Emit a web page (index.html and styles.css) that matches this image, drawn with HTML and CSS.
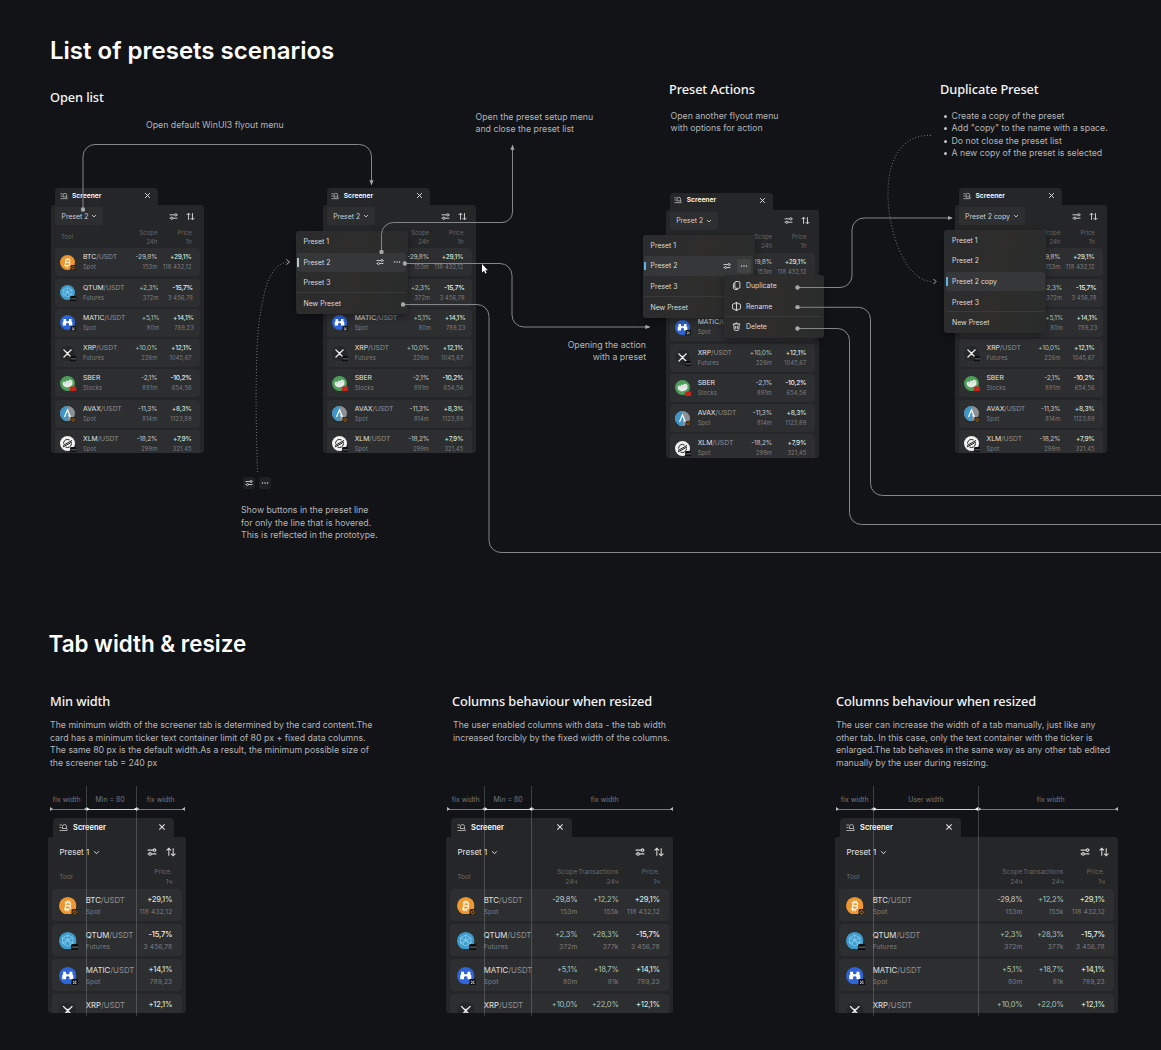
FILE: index.html
```html
<!DOCTYPE html>
<html lang="en">
<head>
    <meta charset="UTF-8">
    <meta name="viewport" content="width=device-width, initial-scale=1.0">
    <title>List of presets scenarios</title>
    <link rel="stylesheet" href="styles.css">
</head>
<body>
    <svg class="sprite" width="0" height="0">
        <symbol id="i-screener" viewBox="0 0 18 18"><path d="M1 4h5M1 9h4M1 15h16M7 11V7a4 4 0 0 1 8 0v4M6 11h10M14 11l3 2"/></symbol>
        <symbol id="i-close" viewBox="0 0 12 12"><path d="M2 2l8 8M10 2l-8 8"/></symbol>
        <symbol id="i-chevron" viewBox="0 0 12 12"><path d="M2 4l4 4 4-4"/></symbol>
        <symbol id="i-sliders" viewBox="0 0 16 16"><path d="M1 5h9M14 5h1M1 11h2M7 11h8"/><circle cx="12" cy="5" r="2"/><circle cx="5" cy="11" r="2"/></symbol>
        <symbol id="i-sort" viewBox="0 0 16 16"><path d="M4.500 14V2M1 5.500L4.500 2 8 5.500M11.500 2v12M8 10.500l3.500 3.500 3.500-3.500"/></symbol>
        <symbol id="i-dots" viewBox="0 0 16 16"><g class="solid"><circle cx="3" cy="8" r="1.500"/><circle cx="8" cy="8" r="1.500"/><circle cx="13" cy="8" r="1.500"/></g></symbol>
        <symbol id="i-copy" viewBox="0 0 16 16"><rect x="5" y="1" width="9" height="12" rx="2"/><path d="M5 3.500C3 3.500 2.500 4.500 2.500 6v6c0 2 1 3 3 3h5"/></symbol>
        <symbol id="i-rename" viewBox="0 0 16 16"><path d="M6.500 3H3a2 2 0 0 0-2 2v6a2 2 0 0 0 2 2h3.500M9.500 3H13a2 2 0 0 1 2 2v6a2 2 0 0 1-2 2H9.500M8 1v14M6 1h4M6 15h4"/></symbol>
        <symbol id="i-trash" viewBox="0 0 16 16"><path d="M1.500 3.500h13M6 3.500a2 2 0 0 1 4 0M3 3.500L4 13a2 2 0 0 0 2 2h4a2 2 0 0 0 2-2l1-9.500M6.500 7v5M9.500 7v5"/></symbol>

        <symbol id="c-btc" viewBox="0 0 30 30"><circle cx="15" cy="15" r="15" fill="#ee962f"/><path d="M12.500 8.500L10.500 21M10 9.500h7c4.500.5 3.500 5.500-.5 5.500h-5H17c4.500.5 3 6-1.500 6H8.500M14.500 6v3.500M18 6.500v3M12 21v3.500M15.500 21v3.500" fill="none" stroke="#fff3dd" stroke-width="2.300"/></symbol>
        <symbol id="c-qtum" viewBox="0 0 30 30"><circle cx="15" cy="15" r="15" fill="#3f9bcc"/><path d="M15 5l9 5v9l-9 5-9-5v-9zM15 5v9l9 5M15 14l-9 5M6 10l9 4 9-4M10 21l5-7 5 7M20 22l4 3" fill="none" stroke="#8ed3f0" stroke-width="1.300"/></symbol>
        <symbol id="c-matic" viewBox="0 0 30 30"><circle cx="15" cy="15" r="15" fill="#2f64d6"/><path d="M7 8h5v3.500l3 1.500 3-1.500V8h5v5l1.500 1v7H18v-4l-3-1.500-3 1.500v4H5.500v-7L7 13z" fill="#fff"/></symbol>
        <symbol id="c-xrp" viewBox="0 0 30 30"><circle cx="15" cy="15" r="15" fill="#242628"/><path d="M7 7l4.500 4.500c2 2 5 2 7 0L23 7M7 23l4.500-4.500c2-2 5-2 7 0L23 23M12 12l6 6M18 12l-6 6" fill="none" stroke="#eee" stroke-width="2.200"/></symbol>
        <symbol id="c-sber" viewBox="0 0 30 30"><circle cx="15" cy="15" r="15" fill="#4d9d5c"/><path d="M5 15l2-4 4 1 2-3 3 1 4-3 5 3v7l-4 4-8 2-6-3z" fill="#e6ebe6"/><path d="M9 15l3-2M14 14l3-2M19 13l3-2" stroke="#9aa79b" fill="none"/></symbol>
        <symbol id="c-avax" viewBox="0 0 30 30"><circle cx="15" cy="15" r="15" fill="#8b9095"/><path d="M15 0A15 15 0 0 0 15 30L17 15z" fill="#3f95c4"/><path d="M9 22l6-14 6 14M17 18l2 3" fill="none" stroke="#f3f6f8" stroke-width="2.600"/></symbol>
        <symbol id="c-xlm" viewBox="0 0 30 30"><circle cx="15" cy="15" r="15" fill="#f2f2f2"/><path d="M6 19L24 9M6 22l18-10M7 15a8 8 0 0 1 12-7M23 15a8 8 0 0 1-12 7" fill="none" stroke="#1c1d1f" stroke-width="2"/></symbol>

        <symbol id="x-binance" viewBox="0 0 12 12"><rect width="12" height="12" rx="3" fill="#30251a"/><path d="M6 2.500L9.500 6 6 9.500 2.500 6z" fill="none" stroke="#d0802c" stroke-width="1.500"/></symbol>
        <symbol id="x-okx" viewBox="0 0 12 12"><rect width="12" height="12" rx="2" fill="#101113"/><path d="M3 3h2v2H3zM7 3h2v2H7zM5 5h2v2H5zM3 7h2v2H3zM7 7h2v2H7z" fill="#e8e8e8"/></symbol>
        <symbol id="x-bybit" viewBox="0 0 14 12"><rect width="14" height="12" rx="3" fill="#0d0e10"/><path d="M2 4.500v3M4 4.500v3M6 5v3M8 4.500v3M10 4.500v3M12 4.500v3" stroke="#a6a6a6" fill="none"/></symbol>
        <symbol id="x-moex" viewBox="0 0 14 12"><rect y="1" width="14" height="10" rx="3" fill="#c8231b"/></symbol>
    </svg>

    <main class="canvas">
        <section class="board">
            <h1>List of presets scenarios</h1>

            <h2 class="open-list">Open list</h2>
            <p class="note note-flyout">Open default WinUI3 flyout menu</p>
            <p class="note note-setup">Open the preset setup menu<br>and close the preset list</p>
            <h2 class="preset-actions">Preset Actions</h2>
            <p class="note note-options">Open another flyout menu<br>with options for action</p>
            <h2 class="duplicate-preset">Duplicate Preset</h2>
            <ul class="note note-rules">
                <li>Create a copy of the preset</li>
                <li>Add "copy" to the name with a space.</li>
                <li>Do not close the preset list</li>
                <li>A new copy of the preset is selected</li>
            </ul>
            <p class="note note-action">Opening the action<br>with a preset</p>
            <div class="hover-buttons">
                <span><svg class="icon"><use href="#i-sliders"/></svg></span>
                <span><svg class="icon"><use href="#i-dots"/></svg></span>
            </div>
            <p class="note note-hover">Show buttons in the preset line<br>for only the line that is hovered.<br>This is reflected in the prototype.</p>

            <div class="panel panel-1" data-preset="Preset 2" data-cols="scope,price" data-rows="7"></div>
            <div class="panel panel-2" data-preset="Preset 2" data-cols="scope,price" data-rows="7"></div>
            <div class="panel panel-3" data-preset="Preset 2" data-cols="scope,price" data-rows="7"></div>
            <div class="panel panel-4" data-preset="Preset 2 copy" data-cols="scope,price" data-rows="7"></div>

            <div class="menu menu-hover">
                <div class="item">Preset 1</div>
                <div class="item active">Preset 2
                    <span class="tools"><i><svg class="icon"><use href="#i-sliders"/></svg></i><i><svg class="icon"><use href="#i-dots"/></svg></i></span>
                </div>
                <div class="item">Preset 3</div>
                <div class="item divided">New Preset</div>
            </div>

            <div class="menu menu-actions">
                <div class="item">Preset 1</div>
                <div class="item active">Preset 2
                    <span class="tools"><i><svg class="icon"><use href="#i-sliders"/></svg></i><i class="pressed"><svg class="icon"><use href="#i-dots"/></svg></i></span>
                </div>
                <div class="item">Preset 3</div>
                <div class="item divided">New Preset</div>
            </div>
            <div class="menu submenu">
                <div class="item"><svg class="icon"><use href="#i-copy"/></svg>Duplicate</div>
                <div class="item"><svg class="icon"><use href="#i-rename"/></svg>Rename</div>
                <div class="item divided"><svg class="icon"><use href="#i-trash"/></svg>Delete</div>
            </div>

            <div class="menu menu-copy">
                <div class="item">Preset 1</div>
                <div class="item">Preset 2</div>
                <div class="item active">Preset 2 copy</div>
                <div class="item">Preset 3</div>
                <div class="item divided">New Preset</div>
            </div>

            <!-- connectors between the screens -->
            <svg class="wires" width="1161" height="600" viewBox="0 0 1161 600">
                <defs>
                    <marker id="arrow" viewBox="0 0 6 6" refX="5" refY="3" markerWidth="5" markerHeight="5" markerUnits="userSpaceOnUse" orient="auto"><path d="M0 .5L6 3 0 5.500z"/></marker>
                    <marker id="dot" viewBox="0 0 6 6" refX="3" refY="3" markerWidth="4.400" markerHeight="4.400" markerUnits="userSpaceOnUse"><circle cx="3" cy="3" r="3"/></marker>
                </defs>
                <g class="wire">
                    <path d="M83 209.500V156.500a12 12 0 0 1 12-12H359.500a12 12 0 0 1 12 12V184.500"/>
                    <path d="M381.500 252V234.500a12 12 0 0 1 12-12H502a10.500 10.500 0 0 0 10.500-10.500V145.500"/>
                    <path d="M404.800 263.500H500a12 12 0 0 1 12 12V315a12 12 0 0 0 12 12H649.500"/>
                    <path class="no-arrow" d="M403 304.500H477a12 12 0 0 1 12 12V540.500a12 12 0 0 0 12 12H1161"/>
                    <path d="M797.500 287.500H840a12 12 0 0 0 12-12V230a12 12 0 0 1 12-12H952"/>
                    <path class="no-arrow" d="M797.500 307.300H858.500a12 12 0 0 1 12 12V483.500a12 12 0 0 0 12 12H1161"/>
                    <path class="no-arrow" d="M797.500 328.500H837.500a12 12 0 0 1 12 12V512.500a12 12 0 0 0 12 12H1161"/>
                </g>
                <g class="dotted">
                    <path d="M257.500 472C256.500 440 255.500 400 256.500 370C257 340 258 320 264 295C268 276 276 263 288 262"/>
                    <path d="M931 135.500C905 134 889 155 888 190C887 230 905 280 931 281.500"/>
                </g>
                <path class="tip" d="M286.500 259.500l3 2.500-3 2.500M933.500 279l2.500 2.500-2.500 2.500"/>
                <path class="cursor" d="M482 264v8.500l2-1.700 1.300 2.800 1.300-.6-1.300-2.700h2.500z"/>
            </svg>
        </section>

        <section class="resize">
            <h1>Tab width &amp; resize</h1>
            <div class="columns">
                <article class="col-min">
                    <h2>Min width</h2>
                    <p>The minimum width of the screener tab is determined by the card content.The<br>card has a minimum ticker text container limit of 80 px + fixed data columns.<br>The same 80 px is the default width.As a result, the minimum possible size of<br>the screener tab = 240 px</p>
                    <div class="sample">
                        <div class="ruler"><span>fix width</span><span class="bright">Min = 80</span><span>fix width</span></div>
                        <div class="panel large" data-preset="Preset 1" data-cols="price" data-rows="4"></div>
                    </div>
                </article>
                <article class="col-data">
                    <h2>Columns behaviour when resized</h2>
                    <p>The user enabled columns with data - the tab width<br>increased forcibly by the fixed width of the columns.</p>
                    <div class="sample">
                        <div class="ruler"><span>fix width</span><span class="bright">Min = 80</span><span>fix width</span></div>
                        <div class="panel large" data-preset="Preset 1" data-cols="scope,trans,price" data-rows="4"></div>
                    </div>
                </article>
                <article class="col-user">
                    <h2>Columns behaviour when resized</h2>
                    <p>The user can increase the width of a tab manually, just like any<br>other tab. In this case, only the text container with the ticker is<br>enlarged.The tab behaves in the same way as any other tab edited<br>manually by the user during resizing.</p>
                    <div class="sample">
                        <div class="ruler"><span>fix width</span><span class="bright">User width</span><span>fix width</span></div>
                        <div class="panel large" data-preset="Preset 1" data-cols="scope,trans,price" data-rows="4"></div>
                    </div>
                </article>
            </div>
        </section>
    </main>
    <script src="script.js"></script>
</body>
</html>
```
FILE: styles.css
```css
* { box-sizing: border-box; }
body {
    margin: 0;
    background-color: #121317;
    color: #fff;
    font-family: Inter, "Liberation Sans", sans-serif;
}
h1, h2, p, ul { margin: 0; }
h1 {
    font-size: 24px;
    line-height: 30px;
    font-weight: 600;
    white-space: nowrap;
}
h2 {
    font-family: "Noto Sans", "Open Sans", sans-serif;
    font-size: 12.8px;
    line-height: 18px;
    letter-spacing: -.1px;
    font-weight: 500;
    color: #f4f4f4;
    white-space: nowrap;
}
.sprite { position: absolute; }
.icon {
    width: 9px;
    height: 9px;
    flex: none;
    fill: none;
    stroke: currentColor;
    stroke-width: 1.7;
}
.icon .solid, .solid { fill: currentColor; stroke: none; }
.canvas {
    width: 1161px;
    height: 1050px;
    overflow: hidden;
}

/* top board */
.board {
    position: relative;
    height: 600px;
    padding: 36px 50px;
}
.board h2, .note, .hover-buttons, .board .panel, .menu, .wires { position: absolute; }
.open-list { left: 50px; top: 88px; }
.preset-actions { left: 669px; top: 80px; }
.duplicate-preset { left: 940px; top: 80px; }
.note, .resize p {
    font-size: 8.75px;
    line-height: 12.5px;
    color: #b4b5b7;
    white-space: nowrap;
}
.note-flyout { left: 146px; top: 119px; }
.note-setup { left: 475.500px; top: 110.500px; }
.note-options { left: 670.500px; top: 109.500px; }
.note-rules { left: 951.500px; top: 109.500px; padding: 0; list-style: none; }
.note-rules li::before {
    content: "";
    float: left;
    width: 3px;
    height: 3px;
    margin: 5px 0 0 -8px;
    border-radius: 50%;
    background-color: #c4c5c7;
}
.note-action { right: 515px; top: 338.500px; text-align: right; }
.note-hover { left: 241px; top: 504.400px; }
.hover-buttons { left: 243px; top: 477px; display: flex; gap: 4px; }
.hover-buttons span {
    display: flex;
    align-items: center;
    justify-content: center;
    width: 12px;
    height: 12px;
    border-radius: 2px;
    background-color: #1f2023;
    color: #ddd;
}
.hover-buttons .icon { width: 8px; height: 8px; }

/* screener panel */
.panel { width: 153px; }
.panel-1 { left: 51px; top: 188px; }
.panel-2 { left: 322.700px; top: 188px; }
.panel-3 { left: 665.700px; top: 192.500px; }
.panel-4 { left: 954.500px; top: 188px; width: 152.500px; }
.tab {
    display: flex;
    align-items: center;
    width: 103px;
    height: 17px;
    margin-left: 4px;
    padding: 0 7px 1.500px 4.500px;
    border-radius: 4px 4px 0 0;
    background-color: #252628;
    font-size: 6.7px;
}
.tab .icon { width: 8px; height: 8px; color: #c0c0c0; }
.tab b { margin-left: 4.500px; font-weight: 600; }
.tab .close { width: 7px; height: 7px; margin-left: auto; color: #ddd; }
.panel .body {
    height: 248px;
    padding: 0 4px;
    overflow: hidden;
    border-radius: 3px;
    background-color: #252628;
}
.toolbar {
    display: flex;
    align-items: center;
    height: 22.500px;
    padding-right: 5px;
    color: #d5d5d5;
}
.preset {
    display: flex;
    align-items: center;
    gap: 3px;
    height: 18px;
    padding: 0 6px 0 6.500px;
    border-radius: 2px;
    background-color: #2d2e2f;
    font-size: 6.9px;
    color: #cfcfcf;
}
.preset .icon { width: 6px; height: 6px; }
.toolbar > .icon { margin-left: 8px; }
.toolbar .first { margin-left: auto; }
.line {
    display: grid;
    grid-template-columns: 23px 1fr 34px 34.400px;
    align-items: center;
    padding: 0 8.300px 0 5px;
    white-space: nowrap;
}
.head {
    height: 20.800px;
    padding-bottom: 2.500px;
    font-size: 5.9px;
    line-height: 9px;
    color: #66686a;
}
.head .tool { grid-column: 1 / 3; padding-left: 1px; }
.num { text-align: right; justify-self: end; }
.row {
    height: 28px;
    margin-bottom: 2.250px;
    border-radius: 4px;
    background-color: #2d2e30;
    font-size: 6.8px;
    line-height: 10px;
}
.coin { position: relative; width: 15px; height: 15px; }
.coin svg { display: block; width: 15px; height: 15px; }
.coin .exchange {
    position: absolute;
    right: -1.500px;
    bottom: -1px;
    width: 6.500px;
    height: 5.500px;
}
.ticker { color: #e2e2e2; }
.ticker em { font-style: normal; color: #8f9193; }
.sub { font-size: 5.7px; letter-spacing: .15px; color: #7d7f81; }
.up, .down { font-size: .97em; letter-spacing: -.2px; }
.up { color: #a5c4b7; }
.down { color: #c6c7c8; }
.price .up { color: #cde4da; font-weight: 500; }
.price .down { color: #f2f2f2; font-weight: 500; }

/* flyout menus */
.menu {
    width: 112px;
    padding: .5px 1.500px;
    border-radius: 3px;
    background: linear-gradient(100deg, #2a2b2c, #2e2d2c 45%, #292b2b);
    box-shadow: 0 3px 7px rgba(0, 0, 0, .35);
    color: #dcdcdc;
    font-size: 6.9px;
}
.menu .item {
    position: relative;
    display: flex;
    align-items: center;
    height: 20.600px;
    padding-left: 6.500px;
    white-space: nowrap;
}
.menu .active {
    height: 19.600px;
    margin: .5px 0;
    border-radius: 2px;
    background-color: #363738;
}
.menu .active::before {
    content: "";
    position: absolute;
    left: 0;
    top: 5.500px;
    width: 2px;
    height: 8.500px;
    background-color: #5bb5e0;
}
.menu .divided { box-shadow: 0 -1px #383939; }
.tools { display: flex; gap: 3px; margin-left: auto; padding-right: 2px; }
.tools i {
    display: flex;
    align-items: center;
    justify-content: center;
    width: 14px;
    height: 14px;
    border-radius: 2px;
}
.tools .icon { width: 8px; height: 8px; }
.tools .pressed { background-color: #424343; }
.menu-hover { left: 295.500px; top: 231px; }
.menu-hover .active::before { background-color: #b5c5cc; }
.menu-actions { left: 642.500px; top: 234.500px; }
.submenu { left: 724px; top: 275px; width: 99.500px; }
.submenu .item { gap: 5px; }
.menu-copy { left: 944px; top: 229.500px; width: 102px; }

.wires { left: 0; top: 0; fill: none; }
.wire path { stroke: #85868a; marker-start: url(#dot); marker-end: url(#arrow); }
.wire .no-arrow { marker-end: none; }
.wires marker { fill: #a6a7aa; }
.wires marker path { stroke: none; }
.dotted { stroke: #77787b; stroke-dasharray: 1 2; }
.tip { stroke: #b0b1b4; }
.cursor { fill: #fff; }

/* bottom section */
.resize { padding: 29px 0 0 48.500px; }
.resize h1 { font-size: 22.4px; }
.columns {
    display: grid;
    grid-template-columns: 402px 384px 1fr;
    margin: 33px 0 0 1.500px;
}
.columns p { height: 76px; padding-top: 9.300px; }
.col-data p { padding-left: 1px; }
.columns .panel { margin-top: 8px; }
.sample { position: relative; width: 137.500px; margin-left: -2px; }
.col-data .sample { width: 227px; margin-left: -6px; }
.col-user .sample { width: 283px; margin-left: -1px; }
.ruler {
    display: grid;
    grid-template-columns: 36.500px 50px 48.500px;
    height: 24px;
    padding-left: 2px;
    font-size: 6.9px;
    color: #77787b;
    text-align: center;
    line-height: 20px;
}
.col-min .ruler span:not(:last-child) { text-indent: -3px; }
.col-data .ruler { grid-template-columns: 37.500px 47px 1fr; padding-left: 1px; }
.col-user .ruler { grid-template-columns: 37.500px 104.800px 1fr; padding-left: 1px; }
.col-data .ruler span:last-child, .col-user .ruler span:last-child { text-indent: 5px; }
.ruler span { position: relative; padding-top: 3.500px; border-bottom: 1px solid #77787b; height: 23.500px; }
.ruler .bright { border-color: #d0d0d2; }
.ruler span::before, .ruler span::after {
    content: "";
    position: absolute;
    bottom: -2.500px;
    width: 3px;
    height: 4px;
    background-color: #b9babc;
    clip-path: polygon(0 0, 100% 50%, 0 100%);
}
.ruler span::before { left: 0; }
.ruler span::after { right: 0; transform: scaleX(-1); }
.ruler .bright::before, .ruler .bright::after { background-color: #fff; }
/* guides run down over the panel */
.ruler .bright i {
    position: absolute;
    z-index: 1;
    left: -.5px;
    right: -.5px;
    top: 0;
    height: 230px;
    border: solid rgba(160, 162, 165, .32);
    border-width: 0 1px;
}
.panel.large { width: 100%; }
.large .tab { width: 121px; height: 19px; margin-left: 4.500px; padding: 0 8px 1px 6px; font-size: 7.5px; }
.large .tab .icon { width: 9px; height: 9px; }
.large .tab b { margin-left: 5.500px; }
.large .tab .close { width: 8px; height: 8px; }
.large .body { height: 176px; }
.large .toolbar { height: 30px; padding: 0 5.500px 0 1px; }
.large .preset { background: none; font-size: 8px; gap: 4px; color: #e4e4e4; }
.large .preset .icon { width: 7px; height: 7px; }
.large .toolbar > .icon { width: 10px; height: 10px; margin-left: 9px; }
.large .toolbar .first { margin-left: auto; }
.large .line { grid-template-columns: 26.400px 1fr 41px 41.200px; padding: 0 9.200px 0 7.300px; }
.large .line.wide { grid-template-columns: 26.400px 1fr 41px 41.200px 41.200px; }
.large .line.narrow { grid-template-columns: 26.400px 1fr 34px; }
.large .head { height: 22px; padding-bottom: 3.500px; font-size: 6.7px; line-height: 10px; }
.large .head .tool { padding: 0; }
.large .row { height: 32px; margin-bottom: 3px; padding-top: 1px; font-size: 7.8px; line-height: 12px; }
.large .sub { height: 12px; font-size: 6.6px; }
.large .coin, .large .coin > svg:first-child { width: 17.500px; height: 17.500px; }
.large .coin .exchange { width: 7.500px; height: 6.500px; }
```
FILE: script.js
```js
const coins = [
    { id: 'btc', name: 'BTC', pair: '/USDT', type: 'Spot', ex: 'binance', scope: ['-29,8%', '153m'], trans: ['+12,2%', '155k'], price: ['+29,1%', '118 432,12'] },
    { id: 'qtum', name: 'QTUM', pair: '/USDT', type: 'Futures', ex: 'bybit', scope: ['+2,3%', '372m'], trans: ['+28,3%', '377k'], price: ['-15,7%', '3 456,78'] },
    { id: 'matic', name: 'MATIC', pair: '/USDT', type: 'Spot', ex: 'okx', scope: ['+5,1%', '80m'], trans: ['+18,7%', '81k'], price: ['+14,1%', '789,23'] },
    { id: 'xrp', name: 'XRP', pair: '/USDT', type: 'Futures', ex: 'bybit', scope: ['+10,0%', '226m'], trans: ['+22,0%', ''], price: ['+12,1%', '1045,67'] },
    { id: 'sber', name: 'SBER', pair: '', type: 'Stocks', ex: 'moex', scope: ['-2,1%', '891m'], price: ['-10,2%', '654,56'] },
    { id: 'avax', name: 'AVAX', pair: '/USDT', type: 'Spot', ex: 'binance', scope: ['-11,3%', '814m'], price: ['+8,3%', '1123,89'] },
    { id: 'xlm', name: 'XLM', pair: '/USDT', type: 'Spot', ex: 'bybit', scope: ['-18,2%', '299m'], price: ['+7,9%', '321,45'] }
];

const heads = {
    small: { scope: ['Scope', '24h'], price: ['Price', '1h'] },
    large: { scope: ['Scope', '24ч'], trans: ['Transactions', '24ч'], price: ['Price.', '1ч'] }
};

const icon = (name, cls = '') => `<svg class="icon ${cls}"><use href="#i-${name}"/></svg>`;

// the last row of a large panel is cut by its edge, only the first line fits
function sub(text, cut) {
    return `<div class="sub">${cut ? '' : text}</div>`;
}

function cell(coin, col, cut) {
    const [change, value] = coin[col];
    const dir = change[0] === '+' ? 'up' : 'down';
    return `<div class="num ${col}"><div class="${dir}">${change}</div>${sub(value, cut)}</div>`;
}

document.querySelectorAll('.panel').forEach(panel => {
    const large = panel.classList.contains('large');
    const cols = panel.dataset.cols.split(',');
    const head = heads[large ? 'large' : 'small'];
    const size = cols.length === 3 ? 'wide' : cols.length === 1 ? 'narrow' : '';

    const rows = coins.slice(0, panel.dataset.rows).map((coin, i) => {
        const cut = large && i === 3;
        return `
        <div class="line row ${size}">
            <div class="coin"><svg><use href="#c-${coin.id}"/></svg><svg class="exchange"><use href="#x-${coin.ex}"/></svg></div>
            <div><div class="ticker">${coin.name}<em>${coin.pair}</em></div>${sub(coin.type, cut)}</div>
            ${cols.map(col => cell(coin, col, cut)).join('')}
        </div>`;
    }).join('');

    panel.innerHTML = `
        <div class="tab">${icon('screener')}<b>Screener</b>${icon('close', 'close')}</div>
        <div class="body">
            <div class="toolbar"><div class="preset">${panel.dataset.preset}${icon('chevron')}</div>${icon('sliders', 'first')}${icon('sort')}</div>
            <div class="line head ${size}"><div class="tool">Tool</div>${cols.map(col => `<div class="num">${head[col].join('<br>')}</div>`).join('')}</div>
            ${rows}
        </div>`;
});

document.querySelectorAll('.ruler .bright').forEach(el => el.appendChild(document.createElement('i')));
```
